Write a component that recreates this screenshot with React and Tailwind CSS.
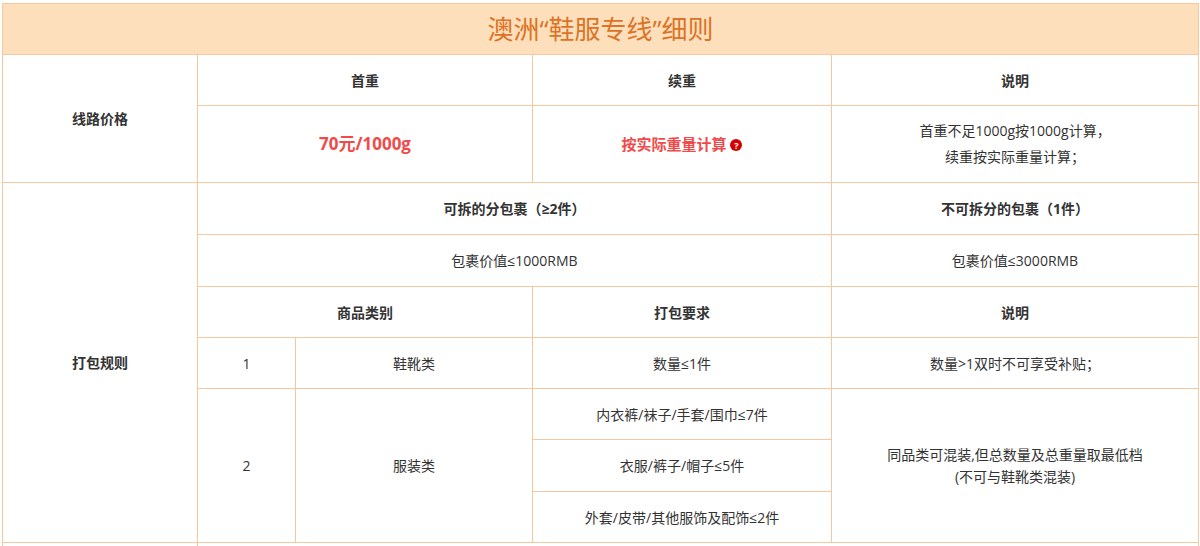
export default function App() {
  const c = "border border-[#f6c8a2] text-center align-middle";
  const b = c + " font-bold";
  return (
    <div className="w-[1200px] h-[546px] overflow-hidden bg-white pt-[3px] pl-[2px]" style={{ fontFamily: '"Open Sans","Noto Sans CJK SC",sans-serif' }}>
      <table className="border-collapse table-fixed w-[1196px] text-[14px] text-[#333]">
        <colgroup>
          <col className="w-[195px]" /><col className="w-[98px]" /><col className="w-[237px]" /><col className="w-[299px]" /><col className="w-[367px]" />
        </colgroup>
        <tbody>
          <tr className="h-[51px]"><td colSpan={5} className="border border-[#f6c8a2] bg-[#fde0bb] text-center text-[26px] text-[#dd7326]">澳洲“鞋服专线”细则</td></tr>
          <tr className="h-[51px]">
            <td rowSpan={2} className={b}>线路价格</td>
            <td colSpan={2} className={b}>首重</td>
            <td className={b}>续重</td>
            <td className={b}>说明</td>
          </tr>
          <tr className="h-[77px]">
            <td colSpan={2} className={c + " font-bold text-[17px] text-[#ef4b4b]"}>70元/1000g</td>
            <td className={c + " font-bold text-[15px] text-[#ef4b4b]"}>按实际重量计算 <span className="inline-flex w-[12px] h-[12px] rounded-full bg-[#d40000] text-white text-[9px] leading-none items-center justify-center align-[1px]">?</span></td>
            <td className={c + " leading-[26px]"}>首重不足1000g按1000g计算，<br />续重按实际重量计算；</td>
          </tr>
          <tr className="h-[52px]">
            <td rowSpan={7} className={b}>打包规则</td>
            <td colSpan={3} className={b}>可拆的分包裹（≥2件）</td>
            <td className={b}>不可拆分的包裹（1件）</td>
          </tr>
          <tr className="h-[52px]">
            <td colSpan={3} className={c}>包裹价值≤1000RMB</td>
            <td className={c}>包裹价值≤3000RMB</td>
          </tr>
          <tr className="h-[51px]">
            <td colSpan={2} className={b}>商品类别</td>
            <td className={b}>打包要求</td>
            <td className={b}>说明</td>
          </tr>
          <tr className="h-[51px]">
            <td className={c}>1</td><td className={c}>鞋靴类</td><td className={c}>数量≤1件</td><td className={c}>数量&gt;1双时不可享受补贴；</td>
          </tr>
          <tr className="h-[51px]">
            <td rowSpan={3} className={c}>2</td><td rowSpan={3} className={c}>服装类</td><td className={c}>内衣裤/袜子/手套/围巾≤7件</td>
            <td rowSpan={3} className={c + " leading-[22px]"}>同品类可混装,但总数量及总重量取最低档<br />(不可与鞋靴类混装)</td>
          </tr>
          <tr className="h-[52px]"><td className={c}>衣服/裤子/帽子≤5件</td></tr>
          <tr className="h-[51px]"><td className={c}>外套/皮带/其他服饰及配饰≤2件</td></tr>
          <tr className="h-[30px]"><td className={c}></td><td colSpan={4} className={c}></td></tr>
        </tbody>
      </table>
    </div>
  );
}
